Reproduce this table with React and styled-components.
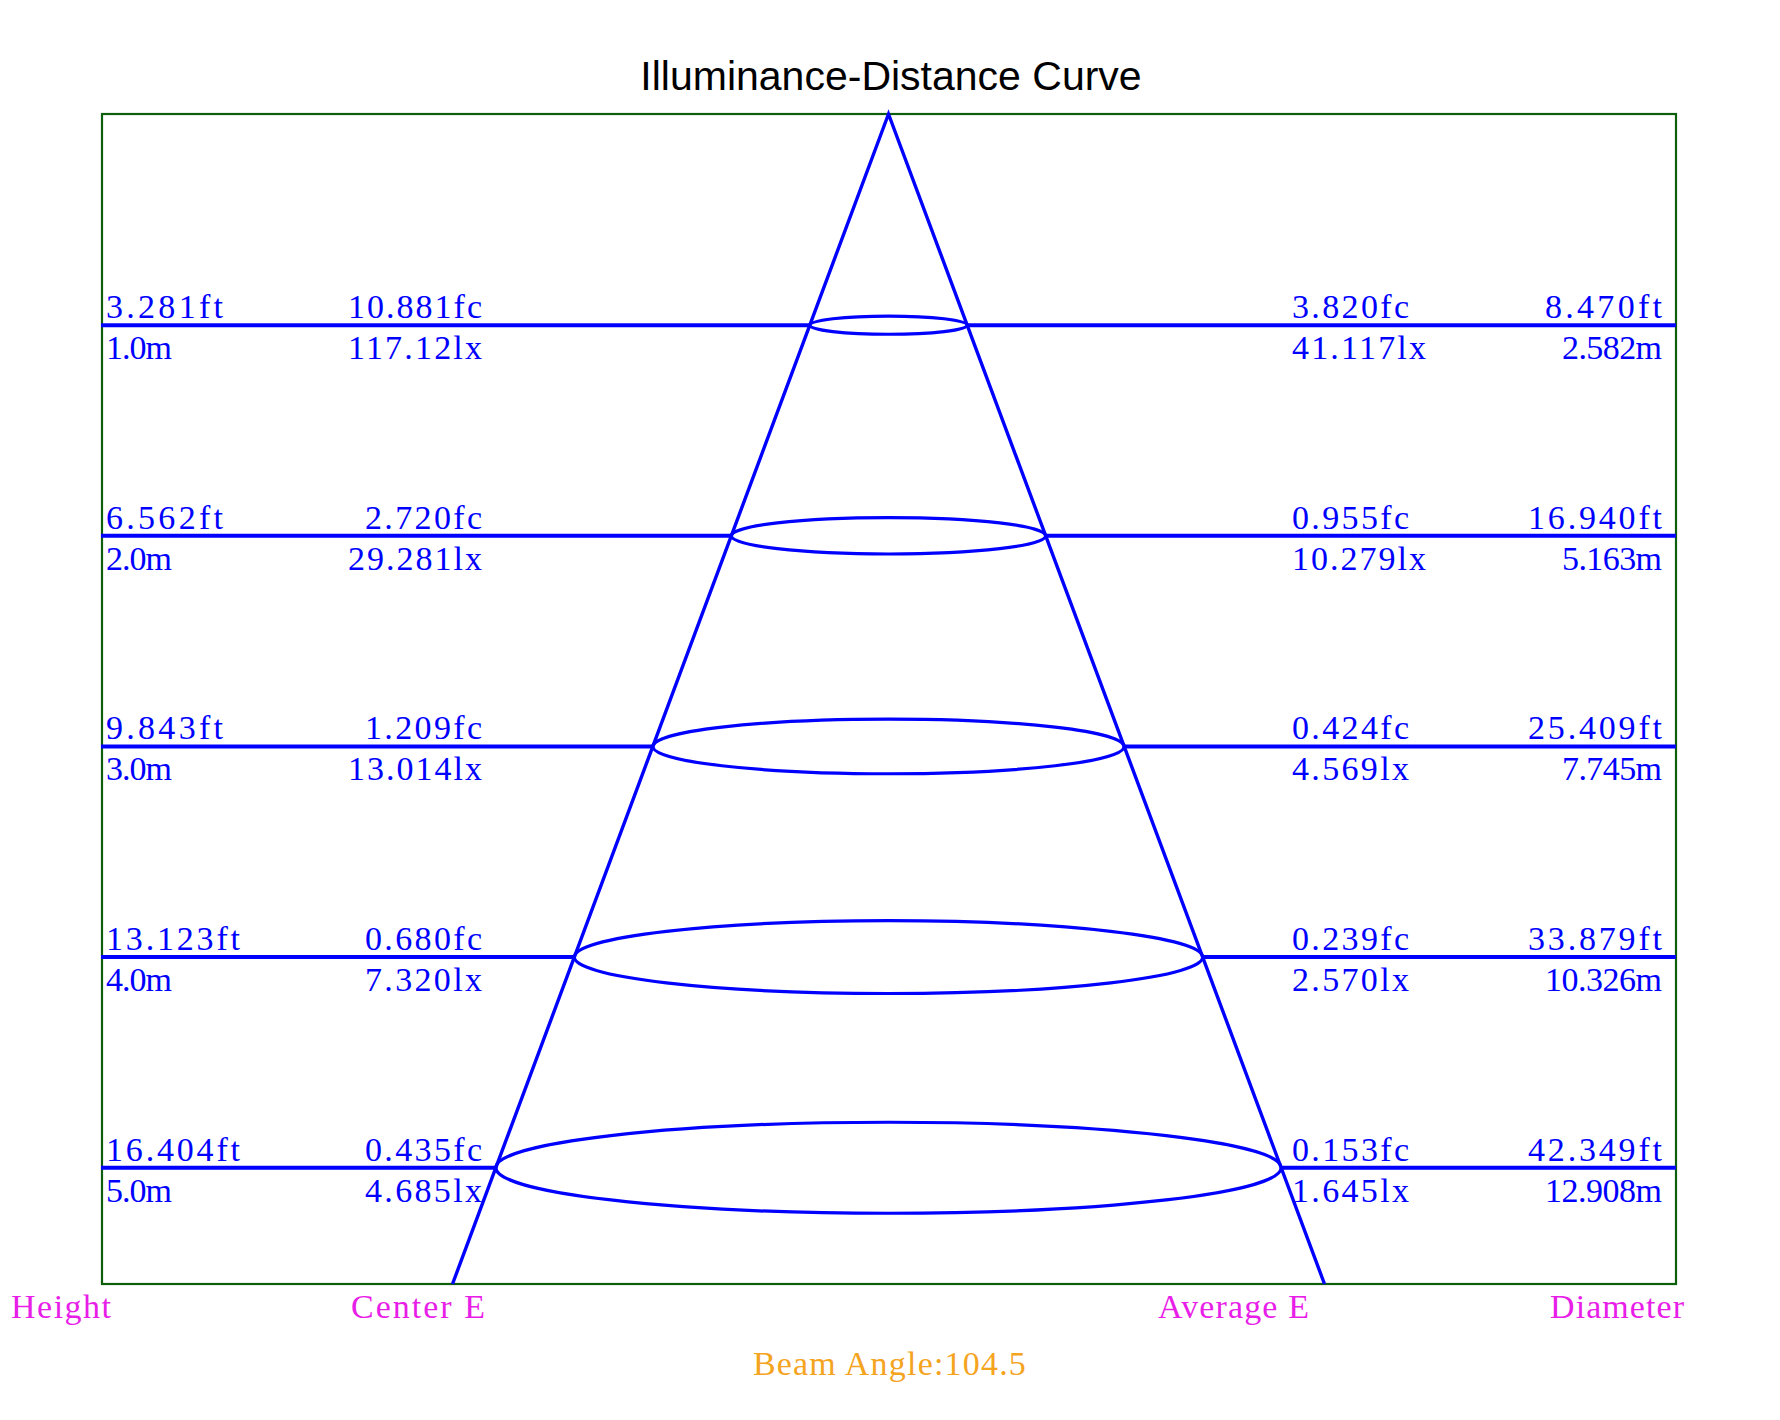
import React from "react";
import styled, { createGlobalStyle } from "styled-components";

const GlobalStyle = createGlobalStyle`
  html, body { margin: 0; padding: 0; background: #ffffff; }
  #root { width: 1780px; height: 1420px; }
`;

const Page = styled.div`
  width: 1780px;
  height: 1420px;
  display: flex;
  flex-direction: column;
  align-items: stretch;
  background: #ffffff;
  overflow: hidden;
`;

const Title = styled.h1`
  margin: 0 0 3px 0;
  padding-top: 56px;
  font-family: "Liberation Sans", Arial, sans-serif;
  font-weight: 400;
  font-size: 41px;
  line-height: 41px;
  color: #000000;
  text-align: center;
  padding-left: 2px;
`;

const ChartSvg = styled.svg`
  display: block;
  width: 1780px;
  height: 1230px;
  flex: none;
`;

const Footer = styled.div`
  margin-top: 17px;
  font-family: "Liberation Serif", "Times New Roman", serif;
  font-size: 34px;
  line-height: 34px;
  letter-spacing: 1.2px;
  color: #f4a41e;
  text-align: center;
`;

const CHAR = 17;
const FONT = `"Liberation Serif", "Times New Roman", serif`;

const BOX = { left: 102, top: 114, right: 1676, bottom: 1284 };
const CX = 888.5;
const SLOPE = 436 / (BOX.bottom - BOX.top);

const levels = [
  { h: "3.281ft", m: "1.0m", cfc: "10.881fc", clx: "117.12lx", afc: "3.820fc", alx: "41.117lx", dft: "8.470ft", dm: "2.582m" },
  { h: "6.562ft", m: "2.0m", cfc: "2.720fc", clx: "29.281lx", afc: "0.955fc", alx: "10.279lx", dft: "16.940ft", dm: "5.163m" },
  { h: "9.843ft", m: "3.0m", cfc: "1.209fc", clx: "13.014lx", afc: "0.424fc", alx: "4.569lx", dft: "25.409ft", dm: "7.745m" },
  { h: "13.123ft", m: "4.0m", cfc: "0.680fc", clx: "7.320lx", afc: "0.239fc", alx: "2.570lx", dft: "33.879ft", dm: "10.326m" },
  { h: "16.404ft", m: "5.0m", cfc: "0.435fc", clx: "4.685lx", afc: "0.153fc", alx: "1.645lx", dft: "42.349ft", dm: "12.908m" },
];

function Label({ x, y, anchor = "start", color = "#0000ff", children }) {
  const s = String(children);
  return (
    <text
      x={x}
      y={y}
      textAnchor={anchor}
      fill={color}
      fontFamily={FONT}
      fontSize="34"
      textLength={s.length * CHAR - 2}
      lengthAdjust="spacing"
    >
      {s}
    </text>
  );
}

function Level({ index, data }) {
  const y = 114.5 + 210.65 * (index + 1);
  const rx = SLOPE * (y - BOX.top);
  const ry = 9.1 * (index + 1);
  return (
    <g>
      <line x1={BOX.left - 1} y1={y} x2={CX - rx} y2={y} stroke="#0000ff" strokeWidth="4" />
      <line x1={CX + rx} y1={y} x2={BOX.right} y2={y} stroke="#0000ff" strokeWidth="4" />
      <ellipse cx={CX} cy={y} rx={rx} ry={ry} fill="none" stroke="#0000ff" strokeWidth="3.2" />
      <Label x={106} y={y - 7}>{data.h}</Label>
      <Label x={106} y={y + 34}>{data.m}</Label>
      <Label x={482} y={y - 7} anchor="end">{data.cfc}</Label>
      <Label x={482} y={y + 34} anchor="end">{data.clx}</Label>
      <Label x={1292} y={y - 7}>{data.afc}</Label>
      <Label x={1292} y={y + 34}>{data.alx}</Label>
      <Label x={1662} y={y - 7} anchor="end">{data.dft}</Label>
      <Label x={1662} y={y + 34} anchor="end">{data.dm}</Label>
    </g>
  );
}

export default function App() {
  const coneL = CX - SLOPE * (BOX.bottom - BOX.top);
  const coneR = CX + SLOPE * (BOX.bottom - BOX.top);
  return (
    <Page>
      <GlobalStyle />
      <Title>Illuminance-Distance Curve</Title>
      <ChartSvg viewBox="0 100 1780 1230" xmlns="http://www.w3.org/2000/svg">
        <rect
          x={BOX.left}
          y={BOX.top}
          width={BOX.right - BOX.left}
          height={BOX.bottom - BOX.top}
          fill="none"
          stroke="#0d5e0d"
          strokeWidth="2.2"
        />
        <polyline
          points={`${coneL},${BOX.bottom} ${CX},${BOX.top} ${coneR},${BOX.bottom}`}
          fill="none"
          stroke="#0000ff"
          strokeWidth="3.4"
          strokeLinejoin="miter"
        />
        {levels.map((d, i) => (
          <Level key={i} index={i} data={d} />
        ))}
        <Label x={11} y={1318} color="#e81ee8">Height</Label>
        <Label x={351} y={1318} color="#e81ee8">Center E</Label>
        <Label x={1158} y={1318} color="#e81ee8">Average E</Label>
        <Label x={1550} y={1318} color="#e81ee8">Diameter</Label>
      </ChartSvg>
      <Footer>Beam Angle:104.5</Footer>
    </Page>
  );
}
